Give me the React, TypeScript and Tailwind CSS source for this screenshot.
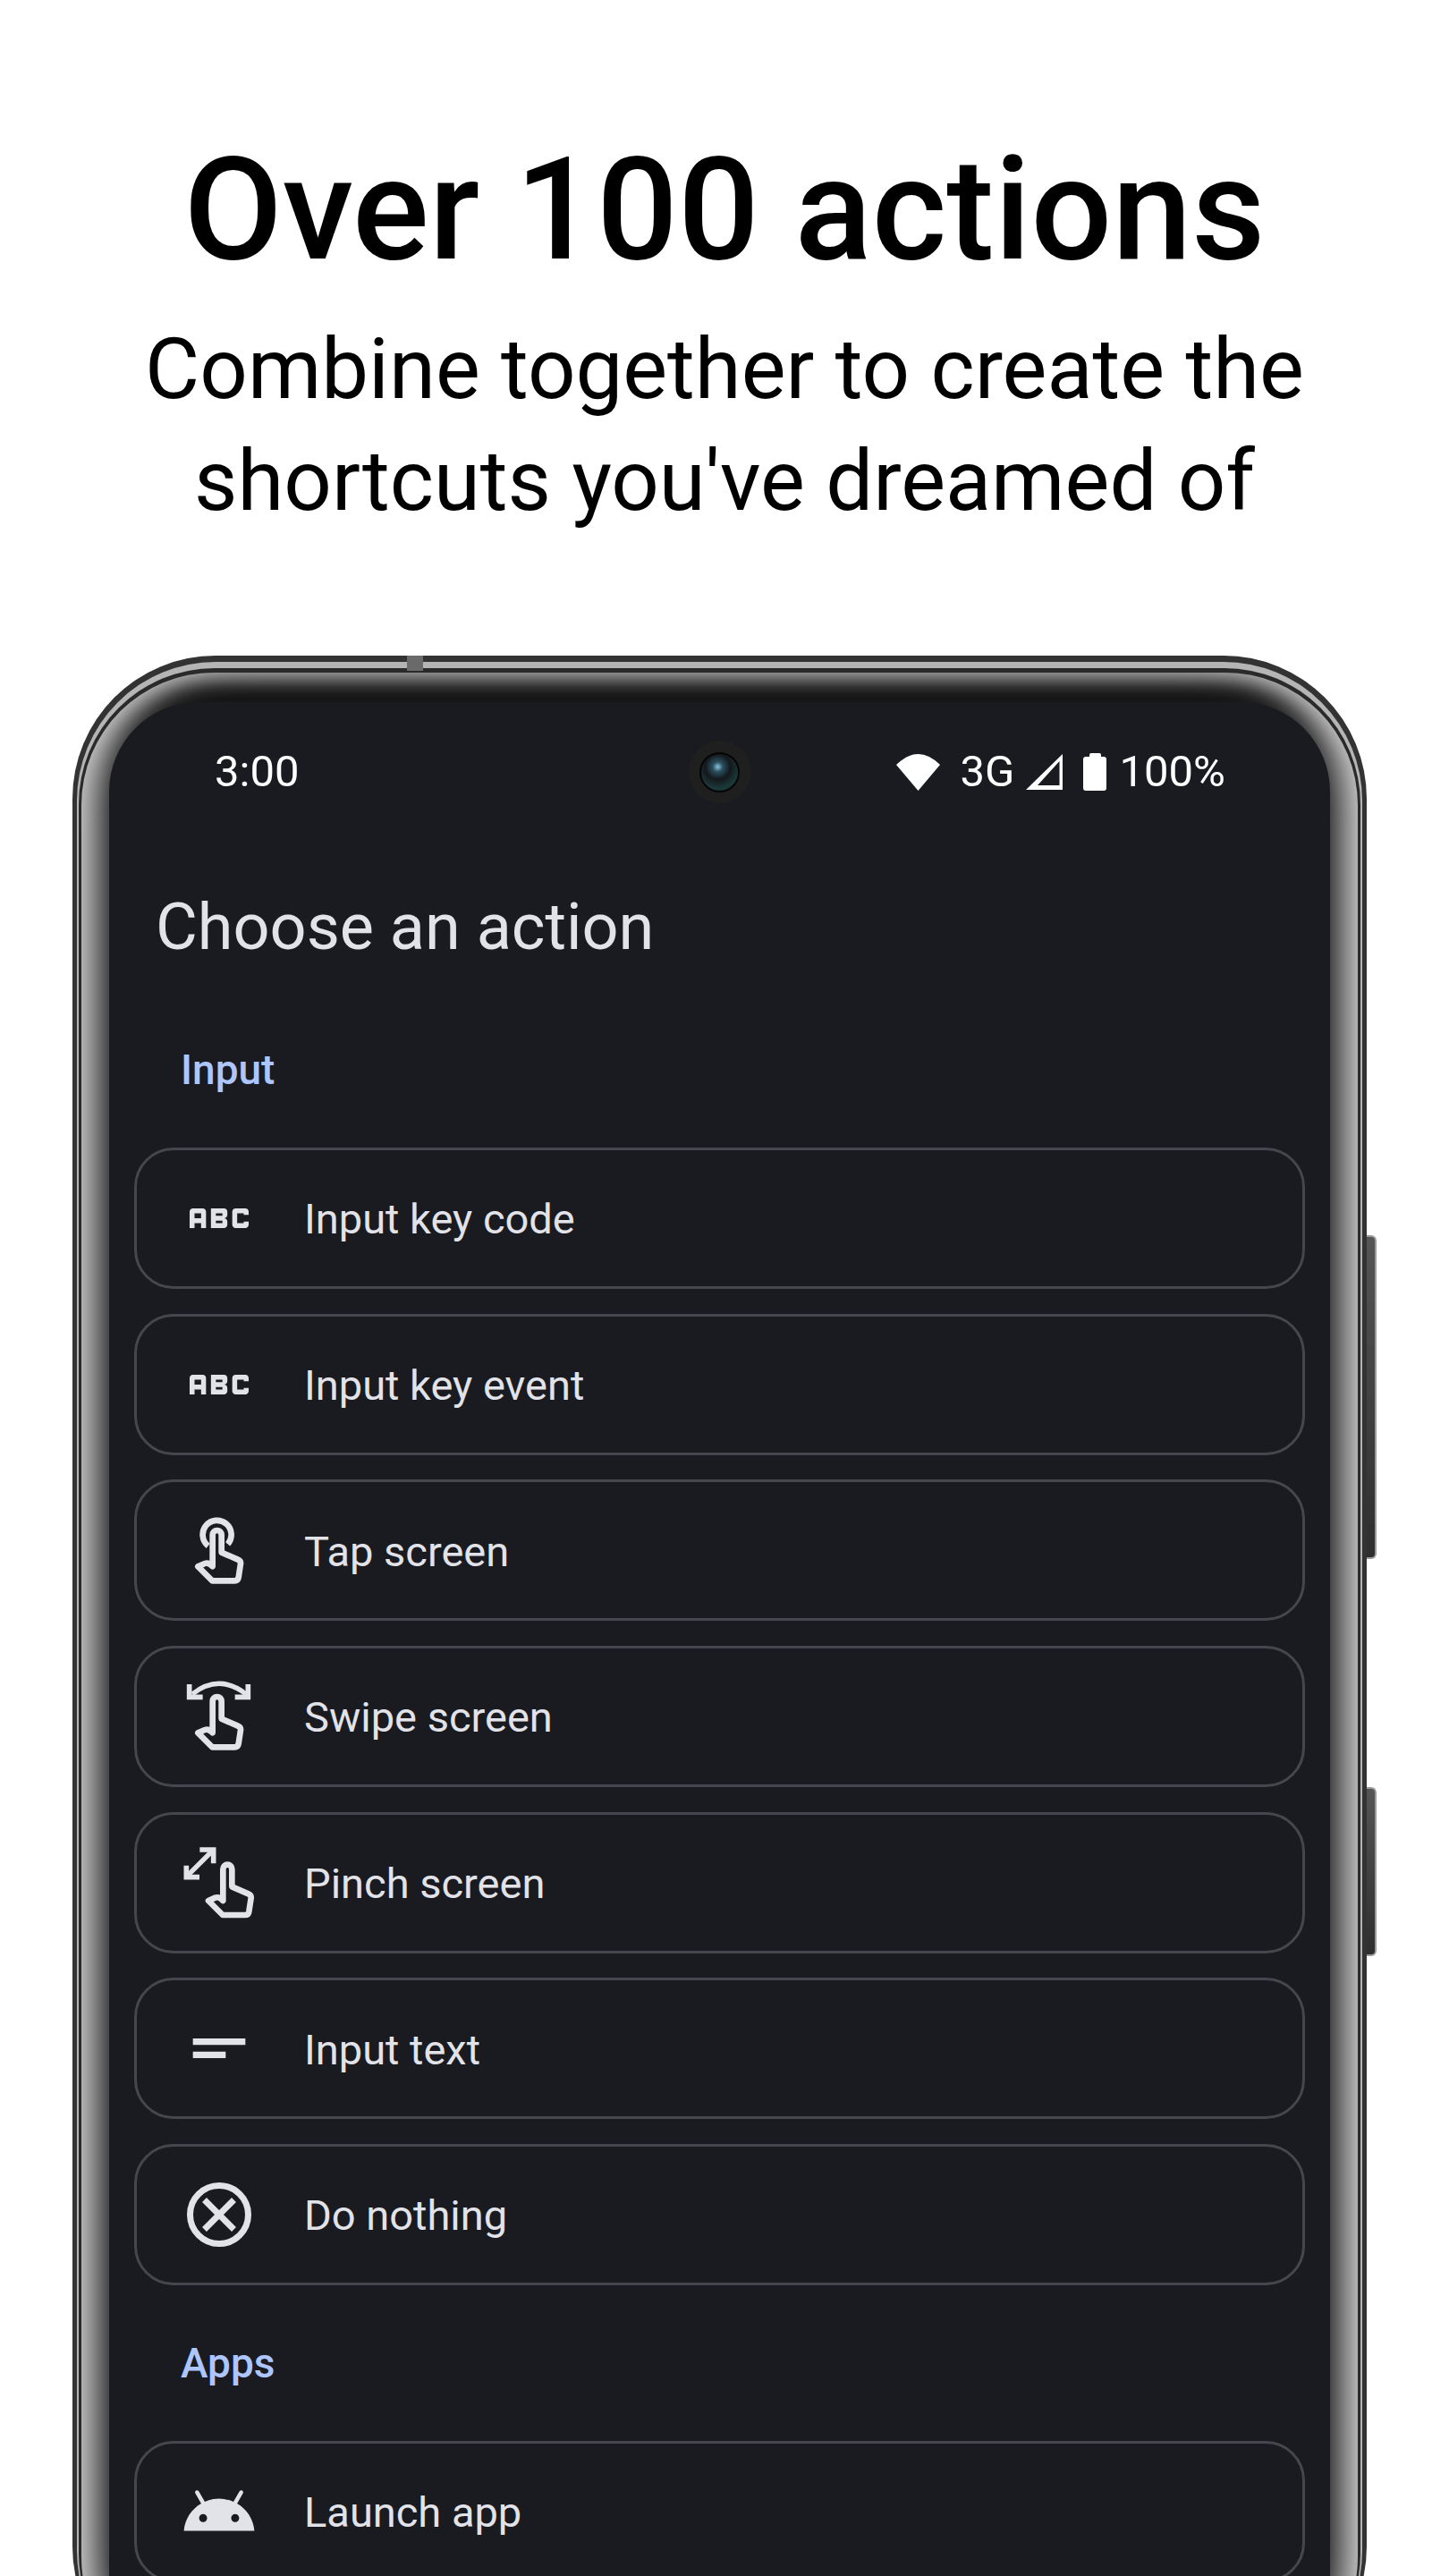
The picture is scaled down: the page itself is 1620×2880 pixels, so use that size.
import { MdAbc, MdShortText } from "react-icons/md";

const handPath = "M173 235V129a15 15 0 0 1 30 0V188L258 212Q268 216 267 226L260 272Q258 283 247 283H172L124 235L147 225Q160 220 173 235Z";

function TapIcon() {
  return (
    <svg viewBox="0 0 390 360" className="w-[130px] h-[120px]" fill="none" stroke="#e2e2e9" strokeWidth="20" strokeLinejoin="round">
      <path d="M158 166A48 48 0 1 1 224 160" />
      <path d={handPath} />
    </svg>
  );
}

function SwipeIcon() {
  return (
    <svg viewBox="0 0 390 360" className="w-[130px] h-[120px]" fill="none" stroke="#e2e2e9" strokeWidth="20" strokeLinejoin="round">
      <path d="M105 105Q195 35 285 105" strokeWidth="16" />
      <path d="M95 72V115H140M292 72V115H248" strokeLinejoin="miter" strokeWidth="17" />
      <path d={handPath} />
    </svg>
  );
}

function PinchIcon() {
  return (
    <svg viewBox="0 0 390 360" className="w-[130px] h-[120px]" fill="none" stroke="#e2e2e9" strokeWidth="20" strokeLinejoin="round">
      <path d="M90 155L170 75" strokeWidth="16" />
      <path d="M130 69H176V115M85 122V161H129" strokeLinejoin="miter" strokeWidth="17" />
      <path d={handPath} transform="translate(35 5)" />
    </svg>
  );
}

function CancelIcon() {
  return (
    <svg viewBox="0 0 88 88" className="w-[88px] h-[88px]" fill="none" stroke="#e2e2e9" strokeWidth="7">
      <circle cx="44" cy="44" r="32.500" />
      <path d="M27.500 27.500L60.500 60.500M60.500 27.500L27.500 60.500" />
    </svg>
  );
}

function AndroidIcon() {
  return (
    <svg viewBox="0 0 24 24" className="w-[86px] h-[86px]" fill="#e2e2e9">
      <path d="M17.6 9.48l1.84-3.18c.16-.31.04-.69-.26-.85-.29-.15-.65-.06-.83.22l-1.88 3.24a11.5 11.5 0 0 0-8.94 0L5.65 5.67c-.19-.29-.58-.38-.87-.2-.28.18-.37.54-.22.83L6.4 9.48C3.3 11.25 1.28 14.44 1 18h22c-.28-3.56-2.3-6.75-5.4-8.52zM7 15.25c-.69 0-1.25-.56-1.25-1.25s.56-1.25 1.25-1.25 1.25.56 1.25 1.25-.56 1.25-1.25 1.25zm10 0c-.69 0-1.25-.56-1.25-1.25s.56-1.25 1.25-1.25 1.25.56 1.25 1.25-.56 1.25-1.25 1.25z" />
    </svg>
  );
}

function ActionRow({ icon, label }: { icon: React.ReactNode; label: string }) {
  return (
    <div className="flex items-center h-[158px] rounded-[44px] border-[3px] border-[#45474e]">
      <div className="flex items-center justify-center w-[130px] h-[120px] ml-[27px] text-[#e2e2e9]">{icon}</div>
      <span className="ml-[30px] pt-[3px] text-[47px] text-[#e2e2e9]">{label}</span>
    </div>
  );
}

function SectionLabel({ children }: { children: React.ReactNode }) {
  return <div className="pl-[80px] h-[60px] leading-[60px] text-[46px] font-medium text-[#adc6ff]">{children}</div>;
}

function StatusBar() {
  return (
    <div className="relative flex items-center justify-between h-[156px] pl-[118px] pr-[117px] text-white text-[49px]">
      <span>3:00</span>
      <div className="absolute left-1/2 top-[43px] -ml-[35px] flex items-center justify-center w-[70px] h-[70px] rounded-full bg-[#1f1f1f]">
        <div className="w-[45px] h-[45px] rounded-full border-2 border-[#050505] bg-[radial-gradient(circle_at_45%_35%,#8cc4dc_0,#2a5060_16%,#14181c_40%,#1c3a3a_70%,#0c0f12_100%)]" />
      </div>
      <div className="flex items-center">
        <svg viewBox="0 0 49 41" className="w-[49px] h-[41px]" fill="#fff">
          <path d="M0 12Q24.500 -12 49 12L24.500 41Z" />
        </svg>
        <span className="ml-[23px]">3G</span>
        <svg viewBox="0 0 41 40" className="ml-[13px] w-[41px] h-[40px]" fill="#fff" fillRule="evenodd">
          <path d="M41 0V40H0ZM37.500 8L13 35H37.500Z" />
        </svg>
        <div className="ml-[23px] flex flex-col items-center">
          <div className="w-[13px] h-[4px] rounded-t-[2px] bg-white" />
          <div className="w-[26px] h-[38px] rounded-[3px] bg-white" />
        </div>
        <span className="ml-[14px]">100%</span>
      </div>
    </div>
  );
}

export default function App() {
  return (
    <div className="w-[1620px] h-[2880px] overflow-hidden bg-white font-[Roboto,sans-serif]">
      <header className="h-[733px] pt-[141px] text-center text-black">
        <h1 className="text-[160px] leading-[187px] font-medium">Over 100 actions</h1>
        <p className="mt-[23px] text-[94px] leading-[125px]">
          Combine together to create the
          <br />
          shortcuts you've dreamed of
        </p>
      </header>

      <div className="relative ml-[81px] w-[1447px]">
        {/* side buttons */}
        <div className="absolute -right-[11px] top-[648px] w-[12px] h-[362px] rounded-r-[6px] border-[2px] border-l-0 border-[#9a9a9a] bg-[linear-gradient(180deg,#555,#2e2e2e)]" />
        <div className="absolute -right-[11px] top-[1265px] w-[12px] h-[189px] rounded-r-[6px] border-[2px] border-l-0 border-[#9a9a9a] bg-[linear-gradient(180deg,#555,#2e2e2e)]" />

        {/* frame rings */}
        <div className="relative rounded-[160px] bg-[#333] pt-[7px] px-[5px]">
          <div className="rounded-[155px] bg-[#b5b5b5] pt-[7px] px-[2px]">
            <div className="rounded-[152px] bg-[#2a2a2a] pt-[5px] px-[3px]">
              <div className="rounded-[148px] bg-[#161616] pt-[33px] px-[31px] shadow-[inset_32px_0_36px_-12px_#c8c8c8,inset_-32px_0_36px_-12px_#c8c8c8,inset_0_20px_18px_-12px_#6a6a6a]">
                <main className="rounded-[100px] bg-[#191b20] pb-[120px]">
                  <StatusBar />
                  <h2 className="mt-[54px] pl-[52px] text-[72px] leading-[84px] text-[#e2e2e9]">Choose an action</h2>
                  <div className="mt-[87px]">
                    <SectionLabel>Input</SectionLabel>
                  </div>
                  <div className="mt-[57px] mx-[28px] flex flex-col gap-[27.67px]">
                    <ActionRow icon={<MdAbc size={88} />} label="Input key code" />
                    <ActionRow icon={<MdAbc size={88} />} label="Input key event" />
                    <ActionRow icon={<TapIcon />} label="Tap screen" />
                    <ActionRow icon={<SwipeIcon />} label="Swipe screen" />
                    <ActionRow icon={<PinchIcon />} label="Pinch screen" />
                    <ActionRow icon={<MdShortText size={88} />} label="Input text" />
                    <ActionRow icon={<CancelIcon />} label="Do nothing" />
                  </div>
                  <div className="mt-[57px]">
                    <SectionLabel>Apps</SectionLabel>
                  </div>
                  <div className="mt-[57px] mx-[28px]">
                    <ActionRow icon={<AndroidIcon />} label="Launch app" />
                  </div>
                </main>
              </div>
            </div>
          </div>
          {/* seams on the top edge */}
          <div className="absolute left-[374px] top-0 w-[18px] h-[17px] bg-[#6a6a6a]" />
          <div className="absolute left-[428px] top-[16px] w-[599px] h-[3px] bg-[#2a2a2a]" />
        </div>
      </div>
    </div>
  );
}
